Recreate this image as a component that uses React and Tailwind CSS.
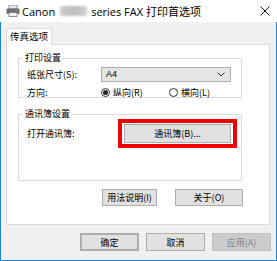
import React from 'react';

const font = { fontFamily: '"Noto Sans CJK SC", "Noto Sans", sans-serif' };

function Btn({ children, className = '' }) {
  return (
    <div className={`flex items-center justify-center bg-[#e1e1e1] border border-[#adadad] text-[9px] text-black leading-none whitespace-nowrap ${className}`}>
      {children}
    </div>
  );
}

function Radio({ checked, label }) {
  return (
    <div className="flex items-center gap-[3px]">
      <div className="w-[9px] h-[9px] rounded-full border border-[#333] bg-white flex items-center justify-center">
        {checked && <div className="w-[5px] h-[5px] rounded-full bg-[#222]" />}
      </div>
      <span className="text-[9px] leading-none whitespace-nowrap">{label}</span>
    </div>
  );
}

function GroupBox({ title, className = '', children }) {
  return (
    <div className={`relative border border-[#dcdcdc] ${className}`}>
      <span className="absolute left-[4px] top-[-7px] bg-white px-[2px] text-[9px] leading-[12px] whitespace-nowrap">{title}</span>
      {children}
    </div>
  );
}

export default function App() {
  return (
    <div className="w-[277px] h-[261px] flex flex-col bg-white text-black" style={font}>
      {/* title bar */}
      <div className="h-[22px] flex items-center pl-[6px] pr-[7px] shrink-0">
        <svg width="14" height="12" viewBox="0 0 14 12" className="mr-[2px]">
          <rect x="3" y="0" width="8" height="4" fill="#e8e8e8" stroke="#7a7a7a" strokeWidth="0.8" />
          <rect x="0.5" y="3.5" width="13" height="5.5" rx="1" fill="#6b6f74" />
          <rect x="3" y="7.5" width="8" height="4" fill="#f4f4f4" stroke="#7a7a7a" strokeWidth="0.8" />
          <rect x="10.5" y="5" width="1.5" height="1" fill="#3fbf4f" />
        </svg>
        <span className="text-[11px] leading-none" style={{ fontFamily: '"Open Sans", "Noto Sans", sans-serif' }}>Canon</span>
        <div className="w-[27px] h-[10px] ml-[5px] mr-[4px] bg-gradient-to-r from-[#cdcdcd] via-[#bcbcbc] to-[#d2d2d2] blur-[1px]" />
        <span className="text-[11px] leading-none whitespace-nowrap" style={{ fontFamily: '"Open Sans", "Noto Sans CJK SC", sans-serif' }}>series FAX 打印首选项</span>
        <div className="flex-1" />
        <svg width="10" height="10" viewBox="0 0 10 10">
          <path d="M0.5 0.5 L9.5 9.5 M9.5 0.5 L0.5 9.5" stroke="#111" strokeWidth="1" />
        </svg>
      </div>

      {/* body */}
      <div className="flex-1 bg-[#f0f0f0] border-l border-r border-b border-[#1883d7] flex flex-col pl-[5px] pr-[6px]">
        <div className="h-[6px]" />
        <div className="flex">
          <div className="w-[46px] h-[17px] bg-white border border-b-0 border-[#dcdcdc] flex items-center justify-center text-[9.5px] leading-none relative z-10 mb-[-1px]">
            传真选项
          </div>
        </div>
        <div className="h-[181px] bg-white border border-[#dcdcdc] pl-[11px] pt-[13px] flex flex-col">
          <GroupBox title="打印设置" className="w-[224px] h-[40px]">
            <div className="flex items-center h-[14px] mt-[8px]">
              <span className="text-[9px] leading-none ml-[8px] w-[74px] whitespace-nowrap">纸张尺寸(S):</span>
              <div className="w-[130px] h-[15px] bg-[#e5e5e5] border border-[#adadad] flex items-center pl-[4px] pr-[5px]">
                <span className="text-[9px] leading-none flex-1" style={{ fontFamily: '"Liberation Sans", sans-serif' }}>A4</span>
                <svg width="8" height="5" viewBox="0 0 8 5">
                  <path d="M0.5 0.5 L4 4 L7.5 0.5" stroke="#333" strokeWidth="1" fill="none" />
                </svg>
              </div>
            </div>
            <div className="flex items-center h-[14px] mt-[4px]">
              <span className="text-[9px] leading-none ml-[8px] w-[74px]">方向:</span>
              <div className="w-[68px]"><Radio checked label="纵向(R)" /></div>
              <Radio label="横向(L)" />
            </div>
          </GroupBox>

          <GroupBox title="通讯簿设置" className="w-[224px] h-[67px] mt-[16px]">
            <div className="flex items-center mt-[4px]">
              <span className="text-[9px] leading-none ml-[8px] w-[91px] whitespace-nowrap">打开通讯簿:</span>
              <div className="w-[119px] h-[29px] border-[4px] border-[#ee0000] p-[2px] flex items-center">
                <Btn className="w-[107px] h-[19px]">通讯簿(B)...</Btn>
              </div>
            </div>
          </GroupBox>

          <div className="flex mt-[8px] ml-[84px] gap-[18px]">
            <Btn className="w-[55px] h-[17px]">用法说明(I)</Btn>
            <Btn className="w-[68px] h-[17px]">关于(O)</Btn>
          </div>
        </div>

        <div className="flex justify-end gap-[7px] mt-[8px] mr-[-1px]">
          <Btn className="w-[59px] h-[18px] border-2 border-[#0078d7]">确定</Btn>
          <Btn className="w-[59px] h-[18px]">取消</Btn>
          <div className="w-[59px] h-[18px] flex items-center justify-center bg-[#cccccc] border border-[#bfbfbf] text-[9px] leading-none text-[#838383]">应用(A)</div>
        </div>
      </div>
    </div>
  );
}
